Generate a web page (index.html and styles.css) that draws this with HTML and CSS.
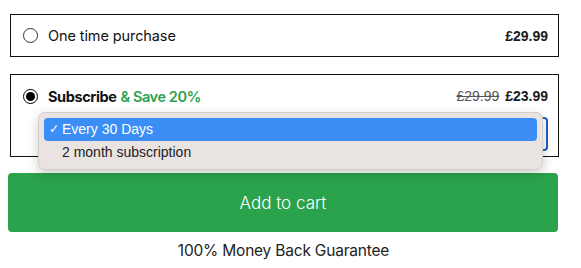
FILE: index.html
```html
<!DOCTYPE html>
<html>
<head>
    <title>Purchase options</title>
    <link rel="stylesheet" href="styles.css">
</head>
<body>
    <div class="buy-box">
        <label class="option">
            <span class="radio"></span>
            <span class="label">One time purchase</span>
            <span class="price">£29.99</span>
        </label>

        <div class="option subscribe">
            <div class="sub-row">
                <span class="radio checked"></span>
                <span class="label"><b>Subscribe</b> <span class="save">&amp; Save 20%</span></span>
                <span class="price"><s class="was">£29.99</s> £23.99</span>
            </div>
            <div class="select"></div>

            <ul class="menu">
                <li class="active"><span class="tick">✓</span>Every 30 Days</li>
                <li>2 month subscription</li>
            </ul>
        </div>

        <button class="cart">Add to cart</button>
        <p class="guarantee">100% Money Back Guarantee</p>
    </div>
</body>
</html>
```

FILE: styles.css
```css
body { margin: 0; background: #fff; font-family: Inter, "Noto Sans", sans-serif; color: #111; }
.buy-box { width: 551px; padding: 14px 0 0 8px; }
.option { display: flex; align-items: center; height: 43px; margin-left: 2px; padding: 0 10px 0 12px; border: 1px solid #111; box-sizing: border-box; }
.radio { width: 15px; height: 15px; border: 1px solid #333; border-radius: 50%; box-sizing: border-box; margin-right: 10px; flex: none; }
.radio.checked { border: 1px solid #000; position: relative; }
.radio.checked::after { content: ""; position: absolute; left: 2px; top: 2px; width: 9px; height: 9px; border-radius: 50%; background: #000; }
.label { font-size: 14.5px; flex: 1; letter-spacing: -0.1px; }
.price { font-family: "Liberation Sans", Arial, sans-serif; font-weight: bold; font-size: 14px; color: #1a1a1a; }
.subscribe { position: relative; display: block; height: 83px; margin-top: 17px; padding: 0 10px 0 12px; }
.sub-row { display: flex; align-items: center; height: 42px; }
.sub-row b { font-weight: 700; letter-spacing: -0.4px; }
.save { color: #2ba24c; font-weight: 600; letter-spacing: -0.4px; }
.was { font-weight: normal; color: #555; margin-right: 2px; }
.select { height: 34px; margin-left: 28px; border: 2px solid #1b5fc4; border-radius: 4px; box-sizing: border-box; }
.menu { position: absolute; left: 27px; top: 37px; width: 505px; margin: 0; padding: 5px; box-sizing: border-box; list-style: none; background: #e9e3e1; border: 1px solid #d3cdcb; border-radius: 7px; box-shadow: 0 4px 12px rgba(0,0,0,0.2); font-family: "Liberation Sans", Arial, sans-serif; font-size: 14px; color: #222; }
.menu li { height: 23px; line-height: 23px; padding-left: 18px; border-radius: 4px; position: relative; }
.menu li.active { background: #3a8ef6; color: #fff; }
.tick { position: absolute; left: 5px; font-size: 12px; }
.cart { display: block; width: 550px; height: 59px; margin-top: 16px; border: none; border-radius: 4px; background: #2ba24c; color: #fff; font-family: Inter, sans-serif; font-weight: 300; font-size: 17px; cursor: pointer; }
.guarantee { margin: 9px 0 0; text-align: center; font-size: 15.5px; color: #222; letter-spacing: -0.2px; }
```
